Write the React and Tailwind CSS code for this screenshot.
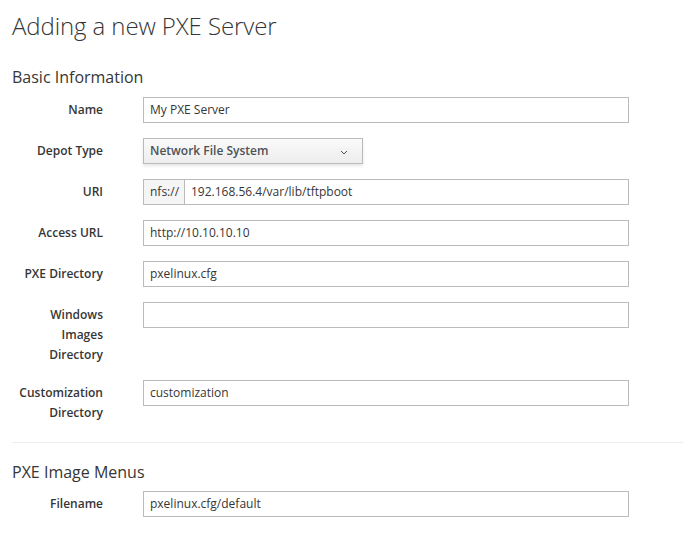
import React from 'react';

const font = { fontFamily: '"Open Sans", "Noto Sans", sans-serif' };

function Row({ label, children }) {
  return (
    <div className="flex items-start gap-[40px] pl-[12px] mb-[15px]">
      <label className="w-[91px] shrink-0 text-right text-[12px] leading-[20px] pt-[3px] font-semibold text-[#363636]">
        {label}
      </label>
      {children}
    </div>
  );
}

function TextInput({ value }) {
  return (
    <div className="w-[486px] h-[26px] border border-[#bbbbbb] bg-white px-[6px] text-[12px] leading-[24px] text-[#363636]">
      {value}
    </div>
  );
}

export default function App() {
  return (
    <div className="w-[683px] h-[552px] bg-white overflow-hidden" style={font}>
      <h1 className="pl-[12px] pt-[8px] text-[24px] leading-[36px] font-light tracking-[-0.1px] text-[#363636]">Adding a new PXE Server</h1>
      <h2 className="pl-[12px] mt-[22px] text-[16px] leading-[22px] text-[#363636]">Basic Information</h2>
      <div className="mt-[9px]">
        <Row label="Name">
          <TextInput value="My PXE Server" />
        </Row>
        <Row label="Depot Type">
          <div className="w-[220px] h-[26px] border border-[#bbbbbb] bg-gradient-to-b from-[#fafafa] to-[#ededed] shadow-[0_2px_3px_rgba(3,3,3,0.1)] flex items-center justify-between pl-[6px] pr-[14px] text-[12px] font-semibold text-[#4d5258]">
            <span>Network File System</span>
            <svg width="8" height="5" viewBox="0 0 8 5" className="mt-[2px]">
              <path d="M1 1 L4 4 L7 1" fill="none" stroke="#4d5258" strokeWidth="1" />
            </svg>
          </div>
        </Row>
        <Row label="URI">
          <div className="w-[486px] h-[26px] flex text-[12px] leading-[24px] text-[#363636]">
            <div className="w-[42px] border border-[#bbbbbb] bg-[#f5f5f5] pl-[6px]">nfs://</div>
            <div className="flex-1 border border-l-0 border-[#bbbbbb] bg-white pl-[6px]">192.168.56.4/var/lib/tftpboot</div>
          </div>
        </Row>
        <Row label="Access URL">
          <TextInput value="http://10.10.10.10" />
        </Row>
        <Row label="PXE Directory">
          <TextInput value="pxelinux.cfg" />
        </Row>
        <Row label={<>Windows<br />Images<br />Directory</>}>
          <TextInput value="" />
        </Row>
        <Row label={<>Customization<br />Directory</>}>
          <TextInput value="customization" />
        </Row>
      </div>
      <div className="ml-[12px] mt-[19px] border-t border-[#ededed]" />
      <h2 className="pl-[12px] mt-[18px] text-[16px] leading-[22px] text-[#363636]">PXE Image Menus</h2>
      <div className="mt-[8px]">
        <Row label="Filename">
          <TextInput value="pxelinux.cfg/default" />
        </Row>
      </div>
    </div>
  );
}
